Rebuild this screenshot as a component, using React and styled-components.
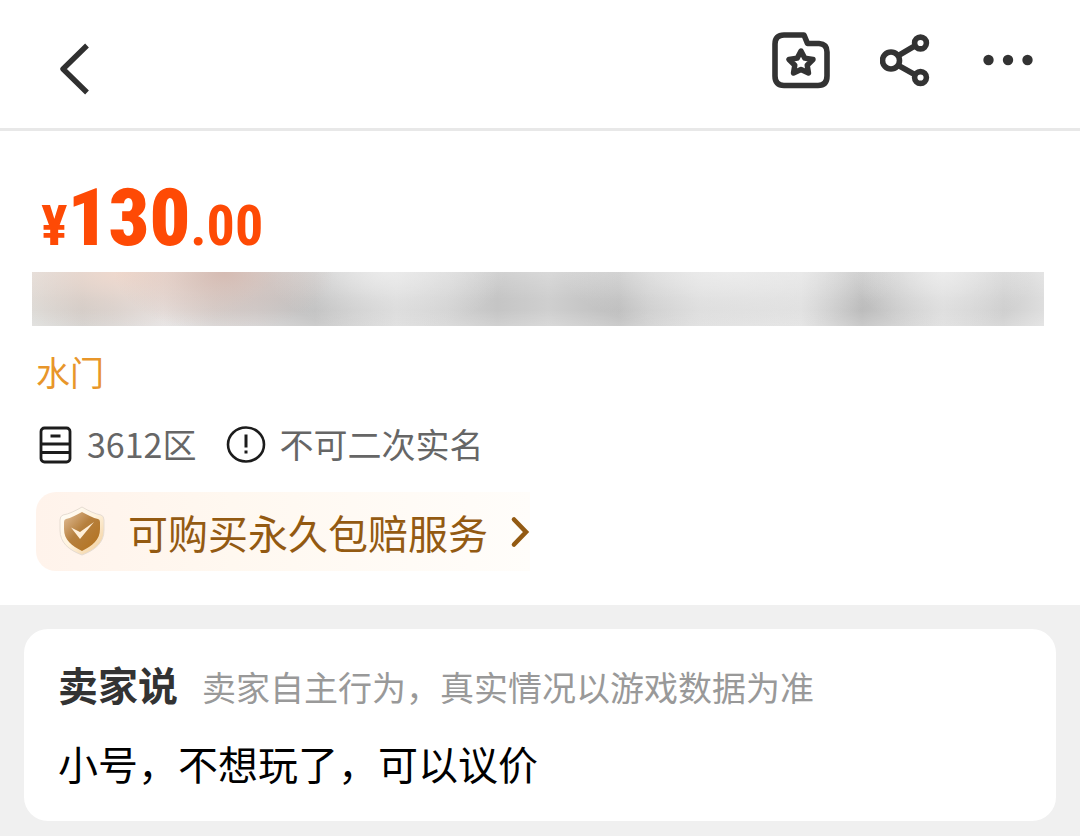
import React from 'react'
import styled, { createGlobalStyle } from 'styled-components'

export default function App () {
  return (
    <>
      <GlobalStyle />
      <StyledHeader>
        <StyledIconButton type="button" aria-label="返回">
          <svg width="36" height="56" viewBox="0 0 36 56" fill="none" stroke="#303030" strokeWidth="5.400">
            <path d="M31 5.500L7 29L31 52.500" strokeLinejoin="round" />
          </svg>
        </StyledIconButton>
        <StyledActions>
          <StyledIconButton type="button" aria-label="收藏">
            <svg width="60" height="60" viewBox="0 0 60 60" fill="none" stroke="#333" strokeWidth="5.600" strokeLinejoin="round">
              <path d="M14 5H34L37.500 13.500H49Q57 14 57 22V46Q57 55.500 48 55.500H14Q5 55.500 5 46V14Q5 5 14 5Z" />
              <path d="M31 21L34.800 28.200L43 29.500L37.200 35.200L38.500 43L31 39.500L23.500 43L24.800 35.200L19 29.500L27.200 28.200Z" strokeWidth="5.400" />
            </svg>
          </StyledIconButton>
          <StyledIconButton type="button" aria-label="分享">
            <svg width="52" height="60" viewBox="0 0 52 60" fill="none" stroke="#333" strokeWidth="5.600">
              <circle cx="11" cy="30.500" r="8.500" />
              <circle cx="40.500" cy="13" r="5.900" />
              <circle cx="40.500" cy="47.500" r="5.900" />
              <path d="M18.500 25.500L35.500 15.500M18.500 35.500L35.500 45" />
            </svg>
          </StyledIconButton>
          <StyledIconButton type="button" aria-label="更多">
            <svg width="52" height="60" viewBox="0 0 52 60" fill="#333">
              <circle cx="6.500" cy="30" r="5.200" />
              <circle cx="26" cy="30" r="5.200" />
              <circle cx="45.500" cy="30" r="5.200" />
            </svg>
          </StyledIconButton>
        </StyledActions>
      </StyledHeader>

      <StyledSummary>
        <StyledPrice>
          <small>¥</small>
          <strong>130</strong>
          <small>.00</small>
        </StyledPrice>
        <StyledBlurredTitle />
        <StyledTag>水门</StyledTag>
        <StyledInfo>
          <StyledInfoItem>
            <svg width="38" height="40" viewBox="0 0 38 40" fill="none" stroke="#1c1c1c" strokeWidth="2.800">
              <rect x="5" y="4" width="29" height="34" rx="3.500" />
              <path d="M5 20H34M5 28.500H34M14.500 12H24.500" />
            </svg>
            <span>3612区</span>
          </StyledInfoItem>
          <StyledInfoItem>
            <svg width="40" height="40" viewBox="0 0 40 40" fill="none" stroke="#1c1c1c" strokeWidth="2.600">
              <ellipse cx="20" cy="20.500" rx="18" ry="17" />
              <path d="M20 10.500V23.500M20 26.500V29.500" strokeWidth="3" />
            </svg>
            <span>不可二次实名</span>
          </StyledInfoItem>
        </StyledInfo>
        <StyledService type="button">
          <Shield />
          <span>可购买永久包赔服务</span>
          <svg width="20" height="32" viewBox="0 0 20 32" fill="none" stroke="#935a12" strokeWidth="4.600">
            <path d="M4 3.500L16 16L4 28.500" strokeLinecap="round" />
          </svg>
        </StyledService>
      </StyledSummary>

      <StyledCard>
        <StyledCardHead>
          <h2>卖家说</h2>
          <span>卖家自主行为，真实情况以游戏数据为准</span>
        </StyledCardHead>
        <p>小号，不想玩了，可以议价</p>
      </StyledCard>
    </>
  )
}

function Shield () {
  return (
    <svg width="48" height="52" viewBox="0 0 48 52">
      <defs>
        <linearGradient id="shieldRim" x1="0" y1="0" x2="1" y2="1">
          <stop offset="0" stopColor="#fffefa" />
          <stop offset="0.500" stopColor="#fff3de" />
          <stop offset="1" stopColor="#f0c992" />
        </linearGradient>
        <linearGradient id="shieldFill" x1="0" y1="0" x2="1" y2="1">
          <stop offset="0" stopColor="#e3c09a" />
          <stop offset="0.450" stopColor="#b6803e" />
          <stop offset="1" stopColor="#b4711b" />
        </linearGradient>
      </defs>
      <path
        d="M24 1C31 5 37 8 43 9Q46 10 46 14V24C46 37 37 44 24 49C11 44 2 37 2 24V14Q2 10 5 9C11 8 17 5 24 1Z"
        fill="url(#shieldRim)"
        stroke="#e6dcd2"
      />
      <path
        d="M24 6C30 9 35 12 40 13Q42 13.500 42 16V23C42 34 34 40 24 45C14 40 6 34 6 23V16Q6 13.500 8 13C13 12 18 9 24 6Z"
        fill="url(#shieldFill)"
      />
      <path d="M13 21.500L22 26L36 16L22 33Z" fill="#fff0da" />
    </svg>
  )
}

const GlobalStyle = createGlobalStyle`
  * {
    box-sizing: border-box;
  }
  body {
    margin: 0;
    background: #f0f0f0;
    font-family: "Noto Sans CJK SC", sans-serif;
  }
  h2, p {
    margin: 0;
  }
  svg {
    display: block;
    flex-shrink: 0;
  }
`

const StyledHeader = styled.header`
  display: flex;
  align-items: flex-end;
  justify-content: space-between;
  padding: 30px 46px 32px 56px;
  background: #fff;
  border-bottom: 3px solid #e8e8e8;
`

const StyledActions = styled.div`
  display: flex;
  gap: 50px;
  padding-bottom: 6px;
`

const StyledIconButton = styled.button`
  padding: 0;
  border: 0;
  background: none;
`

const StyledSummary = styled.section`
  display: flex;
  flex-direction: column;
  align-items: flex-start;
  padding: 40px 36px 34px;
  background: #fff;
`

const StyledPrice = styled.div`
  display: flex;
  align-items: baseline;
  height: 101px;
  padding-left: 5px;
  color: #fe4a05;
  font-family: "Roboto Condensed", Roboto, sans-serif;
  font-weight: 700;
  line-height: 94px;
  strong {
    font-size: 80px;
  }
  small {
    font-size: 56px;
  }
`

const StyledBlurredTitle = styled.div`
  align-self: stretch;
  height: 54px;
  margin-left: -4px;
  background:
    radial-gradient(ellipse 110px 60px at 19% 0, #d2b4aacc, #d2b4aa55 50%, #d2b4aa00),
    radial-gradient(ellipse 150px 60px at 9% 0, #f0d8ccee, #f0d8cc66 50%, #f0d8cc00),
    radial-gradient(ellipse 120px 60px at 35% 0, #eeeeeecc, #eeeeee55 50%, #eeeeee00),
    radial-gradient(ellipse 170px 60px at 69% 0, #eeeeeecc, #eeeeee55 50%, #eeeeee00),
    radial-gradient(ellipse 90px 60px at 90% 0, #eeeeeecc, #eeeeee55 50%, #eeeeee00),
    linear-gradient(#ffffff33, #ffffff00 50%, #ffffff00 70%, #ffffff33),
    linear-gradient(90deg, #dcdbd8 0, #cdcac7 5%, #d3d0ce 8%, #e2e0e0 13%, #d4d1d0 18%, #cfcdcd 22%, #c0c0c0 28%, #cccccc 32%, #d8d8d8 36%, #d2d2d2 41%, #c5c5c5 46%, #cfcfcf 51%, #bebebe 58%, #cccccc 61%, #dadada 66%, #dfdfdf 76%, #cecece 79%, #bcbcbc 82%, #c8c8c8 85%, #dadada 90%, #cecece 96%, #dedede 100%);
`

const StyledTag = styled.p`
  margin-top: 22px;
  color: #e8962a;
  font-size: 34px;
  line-height: 48px;
`

const StyledInfo = styled.div`
  display: flex;
  gap: 30px;
  margin-top: 24px;
`

const StyledInfoItem = styled.div`
  display: flex;
  align-items: center;
  gap: 13px;
  color: #666;
  font-size: 34px;
  line-height: 48px;
`

const StyledService = styled.button`
  display: flex;
  align-items: center;
  height: 79px;
  margin-top: 24px;
  padding: 0 0 0 22px;
  border: 0;
  border-radius: 20px 0 0 20px;
  background: linear-gradient(90deg, #fff3eb, #fff8f0 40%, #fffdfa);
  color: #935a12;
  font-family: inherit;
  font-size: 40px;
  span {
    margin: 0 22px;
  }
`

const StyledCard = styled.section`
  margin: 24px;
  padding: 26px 34px 28px;
  border-radius: 24px;
  background: #fff;
  p {
    margin-top: 20px;
    color: #000;
    font-size: 40px;
    line-height: 60px;
  }
`

const StyledCardHead = styled.div`
  display: flex;
  align-items: baseline;
  gap: 24px;
  h2 {
    color: #333;
    font-size: 40px;
    line-height: 58px;
  }
  span {
    color: #999;
    font-size: 34px;
  }
`
